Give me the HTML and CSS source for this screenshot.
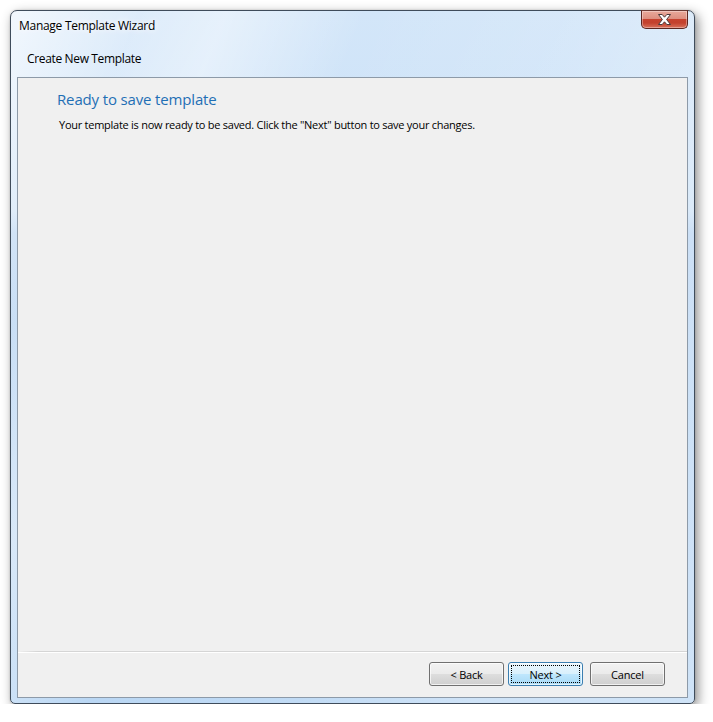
FILE: index.html
```html
<!DOCTYPE html>
<html>
<head>
<meta charset="utf-8">
<title>Manage Template Wizard</title>
<link rel="stylesheet" href="styles.css">
</head>
<body>
<div class="window">
  <div class="titlebar">
    <span class="title">Manage Template Wizard</span>
    <button class="close" aria-label="Close">
      <svg width="15" height="11" viewBox="0 0 15 11">
        <path d="M1.5 0.5 H5.2 L7.5 3.2 L9.8 0.5 H13.5 L9.6 5.5 L13.5 10.5 H9.8 L7.5 7.8 L5.2 10.5 H1.5 L5.4 5.5 Z" fill="#ffffff" stroke="#4b3a3a" stroke-width="1" stroke-linejoin="round"/>
      </svg>
    </button>
  </div>
  <div class="subheader">Create New Template</div>
  <div class="panel">
    <div class="content">
      <h1 class="instruction">Ready to save template</h1>
      <p class="message">Your template is now ready to be saved. Click the "Next" button to save your changes.</p>
    </div>
    <div class="footer">
      <div class="separator"></div>
      <div class="buttons">
        <button class="btn">&lt; Back</button>
        <button class="btn btn-default"><span class="focus">Next &gt;</span></button>
        <button class="btn btn-cancel">Cancel</button>
      </div>
    </div>
  </div>
</div>
</body>
</html>
```
FILE: styles.css
```css
html, body {
  margin: 0;
  padding: 0;
  background: #ffffff;
}
body {
  padding: 10px 0 0 10px;
  font-family: "Open Sans", "Noto Sans", sans-serif;
  font-size: 12px;
  color: #000;
}
.window {
  box-sizing: border-box;
  width: 685px;
  height: 694px;
  border: 1px solid #3f4c5b;
  border-radius: 7px 7px 5px 5px;
  padding: 0 6px 5px 6px;
  display: flex;
  flex-direction: column;
  box-shadow: 3px 4px 12px rgba(0, 0, 0, 0.45), 0 0 2px rgba(0,0,0,0.2);
  background:
    linear-gradient(112deg, rgba(255,255,255,0.7) 0px, rgba(255,255,255,0.25) 120px, rgba(255,255,255,0.45) 200px, rgba(255,255,255,0.0) 330px, rgba(255,255,255,0.1) 520px, rgba(255,255,255,0.3) 685px),
    linear-gradient(to bottom, #d3e6f9 0px, #cbe1f7 200px, #b6d3f2 222px, #bad7f4 100%);
}
.titlebar {
  height: 29px;
  display: flex;
  justify-content: space-between;
  align-items: flex-start;
}
.title {
  padding: 7px 0 0 2px;
  line-height: 16px;
  letter-spacing: -0.28px;
  text-shadow: 0 0 6px #ffffff, 0 0 10px #ffffff;
}
.close {
  box-sizing: border-box;
  width: 47px;
  height: 19px;
  margin: -1px 0 0 0;
  padding: 0;
  border: 1px solid #5b2620;
  border-top-color: #6a3a34;
  border-radius: 0 0 5px 5px;
  background: linear-gradient(to bottom, #e9a99b 0%, #dd8f80 45%, #c6422e 50%, #c3412d 70%, #d9715b 100%);
  box-shadow: inset 0 0 0 1px rgba(255,255,255,0.35);
  display: flex;
  align-items: center;
  justify-content: center;
}
.close svg { display: block; }
.subheader {
  height: 37px;
  display: flex;
  align-items: center;
  padding-left: 10px;
  line-height: 16px;
  letter-spacing: -0.35px;
}
.panel {
  flex: 1;
  box-sizing: border-box;
  border: 1px solid #8d9aa8;
  background: #f0f0f0;
  display: flex;
  flex-direction: column;
}
.content {
  flex: 1;
  padding: 11px 0 0 39px;
}
.instruction {
  margin: 0;
  font-size: 15px;
  font-weight: normal;
  color: #1f6fb5;
  line-height: 20px;
  letter-spacing: -0.15px;
}
.message {
  margin: 8px 0 0 2px;
  font-size: 11px;
  line-height: 15px;
  letter-spacing: -0.26px;
}
.footer {
  display: flex;
  flex-direction: column;
}
.separator {
  height: 1px;
  background: linear-gradient(to right, rgba(213,213,213,0) 0px, #d5d5d5 20px, #d5d5d5 100%);
  border-bottom: 1px solid #ffffff;
}
.buttons {
  display: flex;
  justify-content: flex-end;
  padding: 9px 22px 11px 0;
  gap: 4px;
}
.btn {
  box-sizing: border-box;
  width: 75px;
  height: 24px;
  border: 1px solid #707070;
  border-radius: 3px;
  font-family: "Open Sans", "Noto Sans", sans-serif;
  font-size: 11px;
  letter-spacing: -0.2px;
  color: #000;
  padding: 0;
  background: linear-gradient(to bottom, #f2f2f2 0%, #ebebeb 48%, #dddddd 52%, #cfcfcf 100%);
  box-shadow: inset 0 0 0 1px rgba(255,255,255,0.7);
  display: flex;
  align-items: center;
  justify-content: center;
}
.btn-cancel { margin-left: 3px; }
.btn-default {
  border-color: #3c7fb1;
  background: linear-gradient(to bottom, #eaf6fd 0%, #d9f0fc 48%, #bee6fd 52%, #a7d9f5 100%);
  padding: 2px;
}
.focus {
  flex: 1;
  align-self: stretch;
  display: flex;
  align-items: center;
  justify-content: center;
  border: 1px dotted #000;
}
```
